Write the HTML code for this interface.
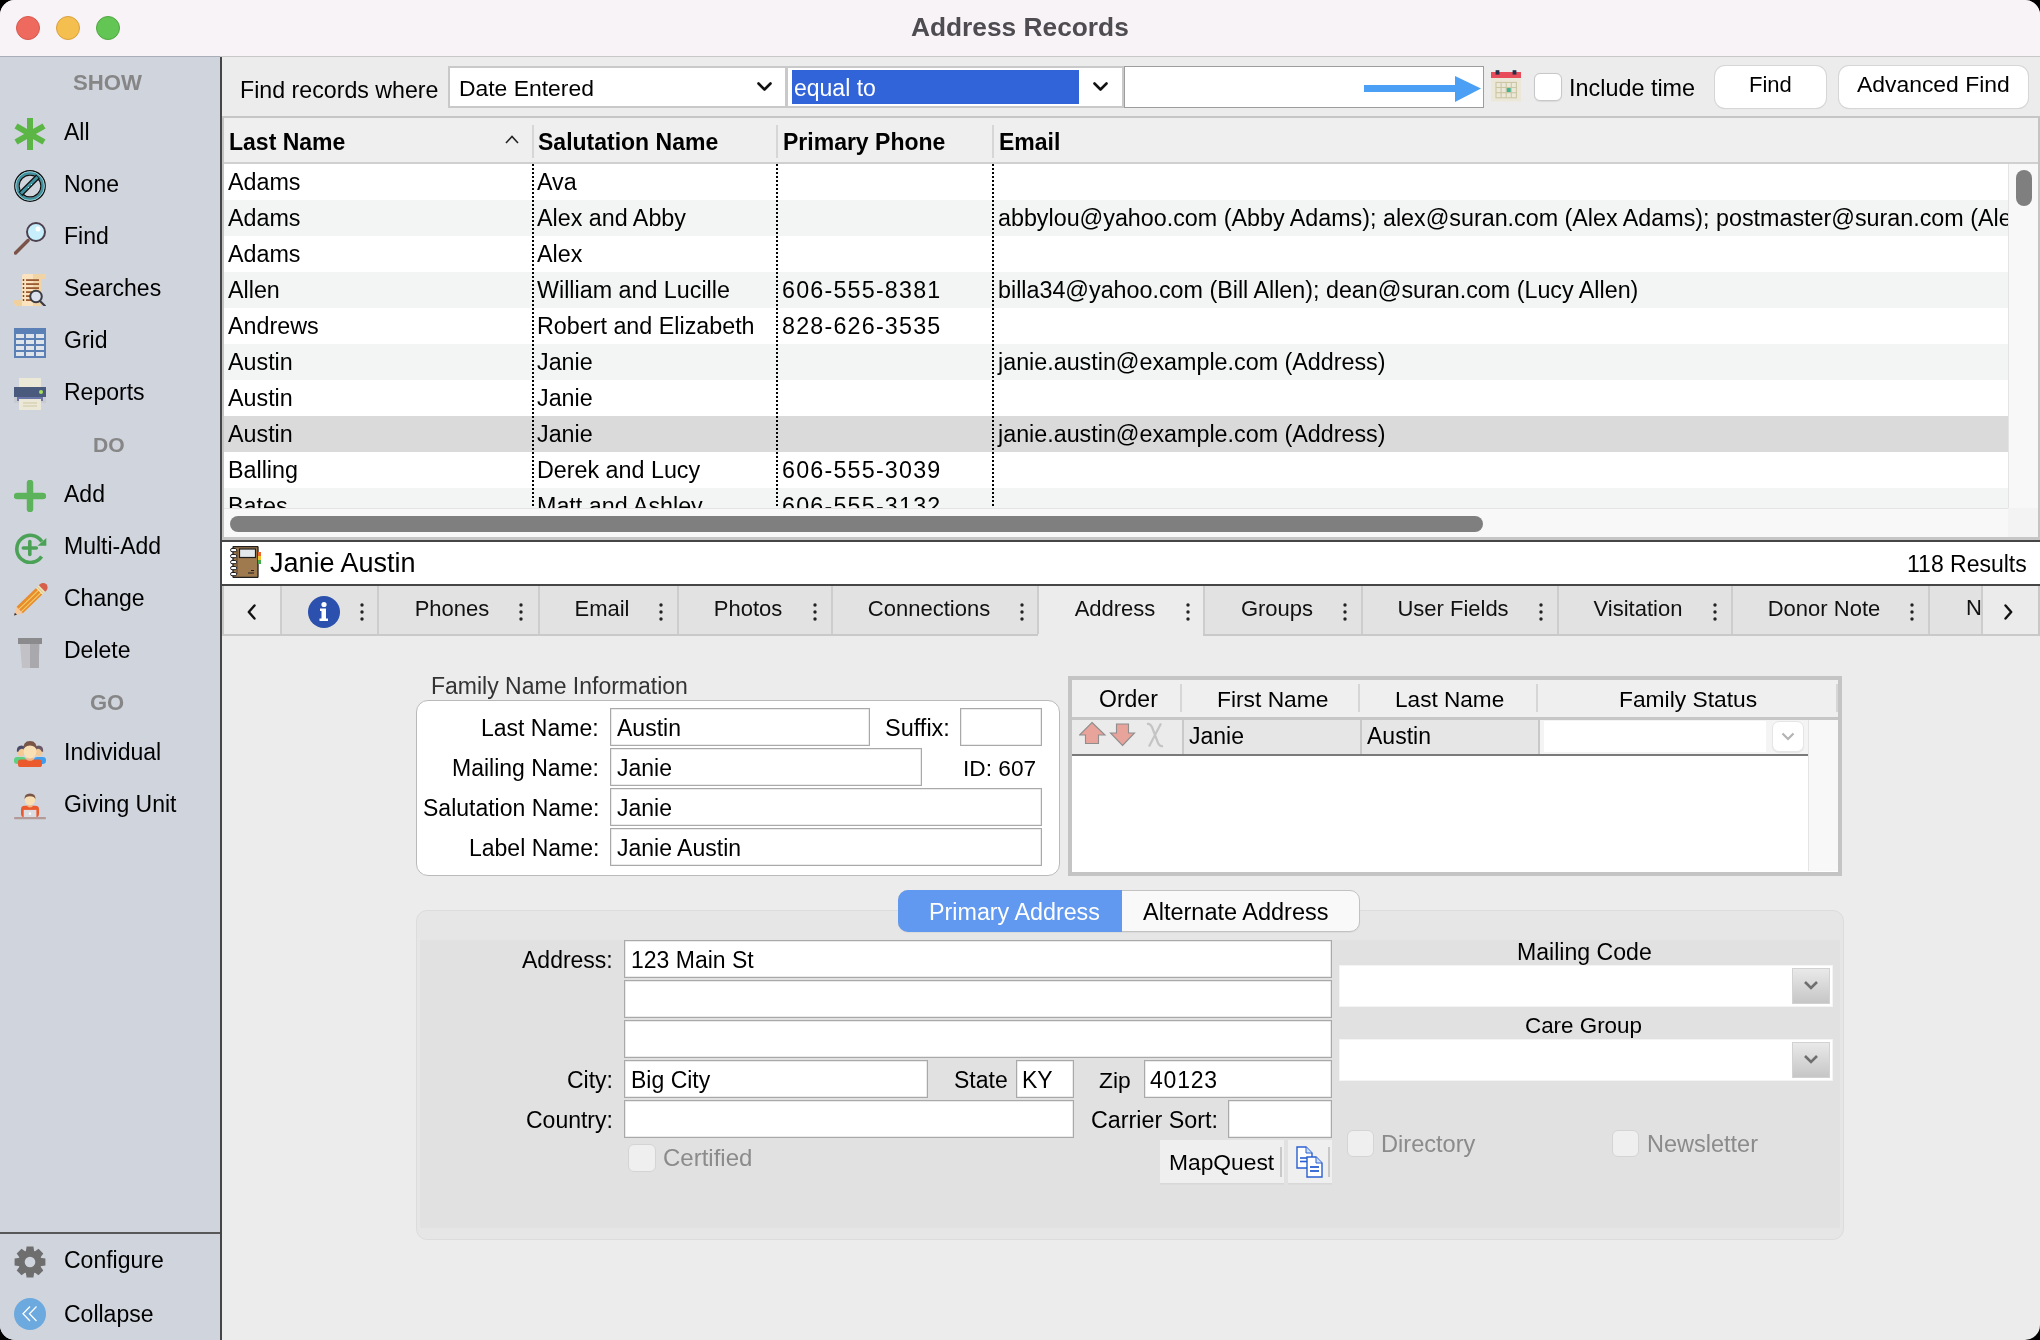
<!DOCTYPE html><html><head><meta charset="utf-8"><title>Address Records</title><style>
html,body{margin:0;padding:0;background:#000;}
#win{position:absolute;left:0;top:0;width:2040px;height:1340px;overflow:hidden;border-radius:15px;background:#ececec;font-family:"Liberation Sans",sans-serif;color:#000;}
.t{position:absolute;white-space:nowrap;will-change:transform;}
.r{position:absolute;box-sizing:border-box;}
</style></head><body><div id="win">
<div class="r" style="left:0px;top:0px;width:2040px;height:56px;background:#f7f3f7;"></div>
<div class="r" style="left:0px;top:56px;width:220px;height:1px;background:#a9aeb8;"></div>
<div class="r" style="left:220px;top:56px;width:1820px;height:1px;background:#c8c8c8;"></div>
<div class="r" style="left:16px;top:16px;width:24px;height:24px;border-radius:50%;background:#ee6a5f;border:1px solid #d8574c;"></div>
<div class="r" style="left:56px;top:16px;width:24px;height:24px;border-radius:50%;background:#f5bf4f;border:1px solid #d9a03f;"></div>
<div class="r" style="left:96px;top:16px;width:24px;height:24px;border-radius:50%;background:#62c554;border:1px solid #4fa73f;"></div>
<div class="t" style="top:14px;font-size:26.3px;line-height:26.3px;font-weight:700;color:#4e4c50;left:911.0px;">Address Records</div>
<div class="r" style="left:0px;top:57px;width:220px;height:1283px;background:#d0d4dd;"></div>
<div class="r" style="left:220px;top:57px;width:2px;height:1283px;background:#454545;"></div>
<div class="t" style="top:72px;font-size:22.2px;line-height:22.2px;font-weight:700;color:#868686;left:72.8px;">SHOW</div>
<div class="t" style="top:434px;font-size:21.1px;line-height:21.1px;font-weight:700;color:#868686;left:93.3px;">DO</div>
<div class="t" style="top:692px;font-size:22px;line-height:22px;font-weight:700;color:#868686;left:-493px;width:1200px;text-align:center;">GO</div>
<div class="t" style="top:121px;font-size:23px;line-height:23px;left:64px;">All</div>
<div class="t" style="top:173px;font-size:23px;line-height:23px;left:64px;">None</div>
<div class="t" style="top:225px;font-size:23px;line-height:23px;left:64px;">Find</div>
<div class="t" style="top:277px;font-size:23px;line-height:23px;left:64px;">Searches</div>
<div class="t" style="top:329px;font-size:23px;line-height:23px;left:64px;">Grid</div>
<div class="t" style="top:381px;font-size:23px;line-height:23px;left:64px;">Reports</div>
<div class="t" style="top:483px;font-size:23px;line-height:23px;left:64px;">Add</div>
<div class="t" style="top:535px;font-size:23px;line-height:23px;left:64px;">Multi-Add</div>
<div class="t" style="top:587px;font-size:23px;line-height:23px;left:64px;">Change</div>
<div class="t" style="top:639px;font-size:23px;line-height:23px;left:64px;">Delete</div>
<div class="t" style="top:741px;font-size:23px;line-height:23px;left:64px;">Individual</div>
<div class="t" style="top:793px;font-size:23px;line-height:23px;left:64px;">Giving Unit</div>
<div class="t" style="top:1249px;font-size:23px;line-height:23px;left:64px;">Configure</div>
<div class="t" style="top:1303px;font-size:23px;line-height:23px;left:64px;">Collapse</div>
<div class="r" style="left:0px;top:1232px;width:220px;height:2px;background:#585858;"></div>
<svg class="r" style="left:14px;top:118px;" width="32" height="32" viewBox="0 0 32 32"><g stroke="#5cb646" stroke-width="6"><line x1="16" y1="0" x2="16" y2="32"/><line x1="2" y1="8" x2="30" y2="24"/><line x1="2" y1="24" x2="30" y2="8"/></g></svg>
<svg class="r" style="left:14px;top:170px;" width="32" height="32" viewBox="0 0 32 32"><circle cx="16" cy="16" r="15.2" fill="none" stroke="#111" stroke-width="1.4"/><circle cx="16" cy="16" r="13" fill="none" stroke="#3f93a0" stroke-width="3"/><circle cx="16" cy="16" r="14.3" fill="none" stroke="#bfe6ec" stroke-width="0.6"/><circle cx="16" cy="16" r="10.9" fill="none" stroke="#111" stroke-width="1.2"/><line x1="6.5" y1="24" x2="24" y2="6.5" stroke="#111" stroke-width="5.4"/><line x1="7" y1="23.5" x2="23.5" y2="7" stroke="#3f93a0" stroke-width="3"/><circle cx="14.5" cy="17.5" r="0.6" fill="#cfe"/><circle cx="17.5" cy="14.5" r="0.6" fill="#cfe"/></svg>
<svg class="r" style="left:14px;top:221px;" width="32" height="34" viewBox="0 0 32 34"><line x1="1.5" y1="32" x2="14" y2="19.5" stroke="#7a5448" stroke-width="3.5" stroke-linecap="round"/><circle cx="22" cy="11" r="9" fill="#c7effb" stroke="#4d4150" stroke-width="2"/><circle cx="24" cy="8" r="2.5" fill="#fff"/></svg>
<svg class="r" style="left:14px;top:274px;" width="32" height="32" viewBox="0 0 32 32"><path d="M8 2 Q8 0 10 0 H30 Q32 0 32 2 V5 H27 V32 H4 Q0 32 0 28 V26 H8 Z" fill="#fbe3c0"/><path d="M19 0 H30 Q32 0 32 2 V5 H27 V32 H19 Z" fill="#efcf9e" opacity="0.8"/><path d="M0 26 H8 V32 H4 Q0 32 0 28 Z" fill="#f0d09c"/><circle cx="9.5" cy="6" r="0.9" fill="#6b3f25"/><rect x="12" y="5.2" width="13" height="1.8" fill="#9a5a32"/><circle cx="9.5" cy="10" r="0.9" fill="#6b3f25"/><rect x="12" y="9.2" width="13" height="1.8" fill="#9a5a32"/><circle cx="9.5" cy="14" r="0.9" fill="#6b3f25"/><rect x="12" y="13.2" width="13" height="1.8" fill="#9a5a32"/><circle cx="9.5" cy="18" r="0.9" fill="#6b3f25"/><rect x="12" y="17.2" width="13" height="1.8" fill="#9a5a32"/><circle cx="9.5" cy="22" r="0.9" fill="#6b3f25"/><rect x="12" y="21.2" width="13" height="1.8" fill="#9a5a32"/><circle cx="9.5" cy="26" r="0.9" fill="#6b3f25"/><rect x="12" y="25.2" width="13" height="1.8" fill="#9a5a32"/><circle cx="22" cy="22.5" r="5.8" fill="#dde1ee" stroke="#3c3c44" stroke-width="2"/><line x1="26" y1="27" x2="31" y2="32" stroke="#3c3c44" stroke-width="2.2" stroke-linecap="round"/></svg>
<svg class="r" style="left:14px;top:328px;" width="32" height="30" viewBox="0 0 32 30"><rect x="0" y="0" width="32" height="30" fill="#5b80b6"/><rect x="2" y="6" width="8" height="4" fill="#dfe3ea"/><rect x="12" y="6" width="8" height="4" fill="#dfe3ea"/><rect x="22" y="6" width="8" height="4" fill="#dfe3ea"/><rect x="2" y="12" width="8" height="4" fill="#dfe3ea"/><rect x="12" y="12" width="8" height="4" fill="#dfe3ea"/><rect x="22" y="12" width="8" height="4" fill="#dfe3ea"/><rect x="2" y="18" width="8" height="4" fill="#dfe3ea"/><rect x="12" y="18" width="8" height="4" fill="#dfe3ea"/><rect x="22" y="18" width="8" height="4" fill="#dfe3ea"/><rect x="2" y="24" width="8" height="4" fill="#dfe3ea"/><rect x="12" y="24" width="8" height="4" fill="#dfe3ea"/><rect x="22" y="24" width="8" height="4" fill="#dfe3ea"/></svg>
<svg class="r" style="left:14px;top:378px;" width="32" height="32" viewBox="0 0 32 32"><rect x="5" y="0" width="22" height="10" fill="#ece8d8"/><rect x="0" y="9" width="32" height="10" fill="#4a5a7c"/><circle cx="27" cy="14" r="2" fill="#a6e05a"/><rect x="0" y="19" width="32" height="6" fill="#c9cbd0"/><rect x="3" y="19" width="26" height="4" fill="#6a76a8"/><rect x="5" y="21" width="22" height="11" fill="#ece8d8"/><g stroke="#cfc7a4" stroke-width="1"><line x1="9" y1="25" x2="23" y2="25"/><line x1="9" y1="28" x2="23" y2="28"/></g></svg>
<svg class="r" style="left:14px;top:480px;" width="32" height="32" viewBox="0 0 32 32"><g stroke="#5cb35c" stroke-width="6.5" stroke-linecap="round"><line x1="16" y1="3" x2="16" y2="29"/><line x1="3" y1="16" x2="29" y2="16"/></g></svg>
<svg class="r" style="left:14px;top:532px;" width="33" height="32" viewBox="0 0 33 32"><path d="M27.8 9.5 A13.6 13.6 0 1 0 27.6 24.6" fill="none" stroke="#4ba257" stroke-width="3.6"/><path d="M23.5 13.8 L32.3 6 L32.3 13.8 Z" fill="#4ba257"/><g stroke="#4ba257" stroke-width="3.6" stroke-linecap="round"><line x1="15.8" y1="9.5" x2="15.8" y2="22.5"/><line x1="9.3" y1="16" x2="22.3" y2="16"/></g></svg>
<svg class="r" style="left:14px;top:583px;overflow:visible;" width="32" height="34" viewBox="0 0 32 34"><g transform="translate(15.8 17.3) rotate(-44)"><path d="M-22 0 L-14 -4.5 L-14 4.5 Z" fill="#f6c89a"/><path d="M-22 0 L-19.3 -1.5 L-19.3 1.5 Z" fill="#2e3340"/><rect x="-14" y="-4.5" width="27" height="9" fill="#e98c2c"/><rect x="-14" y="-1.6" width="27" height="1" fill="#f3d36a"/><rect x="-14" y="1.8" width="27" height="1" fill="#f3d36a"/><rect x="13" y="-4.5" width="4" height="9" fill="#efe4b8"/><rect x="14.3" y="-4.5" width="1" height="9" fill="#d9c98a"/><path d="M17 -4.5 H18.5 A4.5 4.5 0 0 1 18.5 4.5 H17 Z" fill="#d6604c"/></g></svg>
<svg class="r" style="left:18px;top:638px;" width="24" height="30" viewBox="0 0 24 30"><rect x="0" y="0" width="24" height="6" fill="#8b8b8d"/><path d="M2 6 H22 L20 30 H4 Z" fill="#c2c2c6"/><rect x="12" y="6" width="9" height="24" fill="#a9a9ad"/></svg>
<svg class="r" style="left:13px;top:739px;" width="34" height="29" viewBox="0 0 34 29"><rect x="1" y="18" width="12" height="7" rx="3.2" fill="#5cd080"/><rect x="21" y="18" width="12" height="7" rx="3.2" fill="#3d9ff0"/><ellipse cx="8" cy="13" rx="3.6" ry="4.6" fill="#f3c995"/><path d="M3.8 12.5 Q3.5 6.5 8.5 6.5 Q11.5 6.7 12 9 L10 10 Q7 9 5 13 Z" fill="#4b4a68"/><ellipse cx="26" cy="13" rx="3.6" ry="4.6" fill="#f3c995"/><path d="M30.2 12.5 Q30.5 6.5 25.5 6.5 Q22.5 6.7 22 9 L24 10 Q27 9 29 13 Z" fill="#6a5868"/><rect x="5" y="20.5" width="24" height="7.5" rx="2.6" fill="#ea5a2c"/><ellipse cx="17" cy="19.5" rx="3.5" ry="2.3" fill="#f0b888"/><ellipse cx="17" cy="12.3" rx="6.4" ry="7.3" fill="#f9e0b4"/><path d="M10.3 11.5 Q9.5 2 17 2 Q24.5 2 23.7 11.5 Q23 6.8 17 6.5 Q11 6.8 10.3 11.5 Z" fill="#7a5545"/></svg>
<svg class="r" style="left:13px;top:792px;" width="34" height="28" viewBox="0 0 34 28"><rect x="8" y="13.7" width="18" height="11.5" rx="3.5" fill="#ea5a2c"/><ellipse cx="17" cy="13.8" rx="2.8" ry="1.6" fill="#f0b888"/><ellipse cx="17" cy="7.6" rx="5.2" ry="5.8" fill="#f9e0b4"/><path d="M11.6 7.5 Q11 1.4 17 1.4 Q23 1.4 22.4 7.5 Q21.5 4.2 17 4.2 Q12.5 4.2 11.6 7.5 Z" fill="#7a5545"/><rect x="10.7" y="17.9" width="12.7" height="7.3" fill="#dcdde3"/><rect x="16" y="20.6" width="2" height="2" fill="#fff"/><rect x="1" y="25" width="32" height="2.2" rx="1" fill="#b39a98"/></svg>
<svg class="r" style="left:14px;top:1246px;" width="32" height="32" viewBox="0 0 32 32"><path d="M12.6 0.6 H19.4 L20.3 6 H11.7 Z" fill="#6e6e6e" transform="rotate(0 16 16)"/><path d="M12.6 0.6 H19.4 L20.3 6 H11.7 Z" fill="#6e6e6e" transform="rotate(45 16 16)"/><path d="M12.6 0.6 H19.4 L20.3 6 H11.7 Z" fill="#6e6e6e" transform="rotate(90 16 16)"/><path d="M12.6 0.6 H19.4 L20.3 6 H11.7 Z" fill="#6e6e6e" transform="rotate(135 16 16)"/><path d="M12.6 0.6 H19.4 L20.3 6 H11.7 Z" fill="#6e6e6e" transform="rotate(180 16 16)"/><path d="M12.6 0.6 H19.4 L20.3 6 H11.7 Z" fill="#6e6e6e" transform="rotate(225 16 16)"/><path d="M12.6 0.6 H19.4 L20.3 6 H11.7 Z" fill="#6e6e6e" transform="rotate(270 16 16)"/><path d="M12.6 0.6 H19.4 L20.3 6 H11.7 Z" fill="#6e6e6e" transform="rotate(315 16 16)"/><circle cx="16" cy="16" r="11.6" fill="#6e6e6e"/><circle cx="16" cy="16" r="5.3" fill="#d0d4dd"/></svg>
<svg class="r" style="left:14px;top:1298px;" width="32" height="32" viewBox="0 0 32 32"><circle cx="16" cy="16" r="16" fill="#6ba9de"/><polyline points="16,8.5 9,15.8 16,23" fill="none" stroke="#fff" stroke-width="1.3"/><polyline points="22.5,8.5 15.5,15.8 22.5,23" fill="none" stroke="#fff" stroke-width="1.3"/></svg>
<div class="t" style="top:79px;font-size:23.2px;line-height:23.2px;left:239.6px;">Find records where</div>
<div class="r" style="left:448px;top:66px;width:339px;height:42px;background:#fff;border:2px solid #c9c9c9;"></div>
<div class="t" style="top:77px;font-size:22.9px;line-height:22.9px;left:459.0px;">Date Entered</div>
<svg class="r" style="left:757px;top:82px;" width="15" height="10" viewBox="0 0 15 10"><polyline points="1.5,1.5 7.5,7.5 13.5,1.5" fill="none" stroke="#111" stroke-width="2.6" stroke-linecap="round" stroke-linejoin="round"/></svg>
<div class="r" style="left:786px;top:66px;width:338px;height:42px;background:#fff;border:2px solid #c9c9c9;"></div>
<div class="r" style="left:792px;top:70px;width:287px;height:34px;background:#3163d9;"></div>
<div class="t" style="top:77px;font-size:23px;line-height:23px;color:#fff;left:794px;">equal to</div>
<svg class="r" style="left:1093px;top:82px;" width="15" height="10" viewBox="0 0 15 10"><polyline points="1.5,1.5 7.5,7.5 13.5,1.5" fill="none" stroke="#111" stroke-width="2.6" stroke-linecap="round" stroke-linejoin="round"/></svg>
<div class="r" style="left:1124px;top:66px;width:360px;height:42px;background:#fff;border:1px solid #9d9d9d;"></div>
<svg class="r" style="left:1362px;top:74px;" width="120" height="30" viewBox="0 0 120 30"><rect x="2" y="11" width="92" height="7" fill="#4b9ff4"/><path d="M93 2 L119 14.5 L93 28 Z" fill="#4b9ff4"/></svg>
<svg class="r" style="left:1491px;top:69px;" width="30" height="33" viewBox="0 0 30 33"><rect x="0" y="9" width="30" height="23.5" fill="#ebe8da"/><rect x="0" y="3" width="30" height="6" fill="#e84b5a"/><rect x="4.6" y="1.2" width="3.8" height="4.4" fill="#243049"/><rect x="21.6" y="1.2" width="3.8" height="4.4" fill="#243049"/><rect x="15.3" y="18.6" width="4.6" height="4.6" fill="#3eb592"/><g stroke="#cdc6a2" stroke-width="1.1" fill="none"><rect x="5" y="13.4" width="20.4" height="15.4"/><line x1="10.1" y1="13.4" x2="10.1" y2="28.8"/><line x1="15.2" y1="13.4" x2="15.2" y2="28.8"/><line x1="20.3" y1="13.4" x2="20.3" y2="28.8"/><line x1="5" y1="18.5" x2="25.4" y2="18.5"/><line x1="5" y1="23.7" x2="25.4" y2="23.7"/></g></svg>
<div class="r" style="left:1534px;top:73px;width:28px;height:28px;background:#fff;border:1px solid #c8c8c8;border-radius:6px;box-shadow:0 0.5px 1px rgba(0,0,0,0.08);"></div>
<div class="t" style="top:77px;font-size:23.4px;line-height:23.4px;left:1569.0px;">Include time</div>
<div class="r" style="left:1715px;top:66px;width:111px;height:42px;background:#fff;border-radius:10px;box-shadow:0 0 0 1px #d6d6d6, 0 1px 1px rgba(0,0,0,0.12);"></div>
<div class="t" style="top:74px;font-size:22.0px;line-height:22.0px;left:1749.0px;">Find</div>
<div class="r" style="left:1839px;top:66px;width:189px;height:42px;background:#fff;border-radius:10px;box-shadow:0 0 0 1px #d6d6d6, 0 1px 1px rgba(0,0,0,0.12);"></div>
<div class="t" style="top:73px;font-size:22.9px;line-height:22.9px;left:1857.0px;">Advanced Find</div>
<div class="r" style="left:222px;top:116px;width:1818px;height:2px;background:#c6c6c6;"></div>
<div class="r" style="left:222px;top:118px;width:2px;height:422px;background:#c4c4c4;"></div>
<div class="r" style="left:2038px;top:118px;width:2px;height:422px;background:#c4c4c4;"></div>
<div class="r" style="left:224px;top:118px;width:1814px;height:44px;background:#efefef;"></div>
<div class="r" style="left:224px;top:162px;width:1814px;height:2px;background:#d0d0d0;"></div>
<div class="t" style="top:131px;font-size:23px;line-height:23px;font-weight:700;left:229px;">Last Name</div>
<svg class="r" style="left:505px;top:135px;" width="14" height="9" viewBox="0 0 14 9"><polyline points="1,8 7,1.5 13,8" fill="none" stroke="#222" stroke-width="1.6"/></svg>
<div class="r" style="left:532px;top:125px;width:2px;height:33px;background:#d6d6d6;"></div>
<div class="r" style="left:776px;top:125px;width:2px;height:33px;background:#d6d6d6;"></div>
<div class="r" style="left:992px;top:125px;width:2px;height:33px;background:#d6d6d6;"></div>
<div class="t" style="top:131px;font-size:23px;line-height:23px;font-weight:700;left:538px;">Salutation Name</div>
<div class="t" style="top:131px;font-size:23px;line-height:23px;font-weight:700;left:783px;">Primary Phone</div>
<div class="t" style="top:131px;font-size:23px;line-height:23px;font-weight:700;left:999px;">Email</div>
<div class="r" style="left:224px;top:164px;width:1784px;height:344px;overflow:hidden;background:#fff;">
<div class="r" style="left:0;top:0px;width:1784px;height:36px;background:#fff;"></div>
<div class="t" style="left:4px;top:7px;font-size:23.3px;line-height:23px;">Adams</div>
<div class="t" style="left:313px;top:7px;font-size:23.3px;line-height:23px;">Ava</div>
<div class="r" style="left:0;top:36px;width:1784px;height:36px;background:#f3f4f4;"></div>
<div class="t" style="left:4px;top:43px;font-size:23.3px;line-height:23px;">Adams</div>
<div class="t" style="left:313px;top:43px;font-size:23.3px;line-height:23px;">Alex and Abby</div>
<div class="t" style="left:774px;top:43px;font-size:23.3px;line-height:23px;">abbylou@yahoo.com (Abby Adams); alex@suran.com (Alex Adams); postmaster@suran.com (Alex Adams)</div>
<div class="r" style="left:0;top:72px;width:1784px;height:36px;background:#fff;"></div>
<div class="t" style="left:4px;top:79px;font-size:23.3px;line-height:23px;">Adams</div>
<div class="t" style="left:313px;top:79px;font-size:23.3px;line-height:23px;">Alex</div>
<div class="r" style="left:0;top:108px;width:1784px;height:36px;background:#f3f4f4;"></div>
<div class="t" style="left:4px;top:115px;font-size:23.3px;line-height:23px;">Allen</div>
<div class="t" style="left:313px;top:115px;font-size:23.3px;line-height:23px;">William and Lucille</div>
<div class="t" style="left:558px;top:115px;font-size:23.3px;line-height:23px;letter-spacing:1.2px;">606-555-8381</div>
<div class="t" style="left:774px;top:115px;font-size:23.3px;line-height:23px;">billa34@yahoo.com (Bill Allen); dean@suran.com (Lucy Allen)</div>
<div class="r" style="left:0;top:144px;width:1784px;height:36px;background:#fff;"></div>
<div class="t" style="left:4px;top:151px;font-size:23.3px;line-height:23px;">Andrews</div>
<div class="t" style="left:313px;top:151px;font-size:23.3px;line-height:23px;">Robert and Elizabeth</div>
<div class="t" style="left:558px;top:151px;font-size:23.3px;line-height:23px;letter-spacing:1.2px;">828-626-3535</div>
<div class="r" style="left:0;top:180px;width:1784px;height:36px;background:#f3f4f4;"></div>
<div class="t" style="left:4px;top:187px;font-size:23.3px;line-height:23px;">Austin</div>
<div class="t" style="left:313px;top:187px;font-size:23.3px;line-height:23px;">Janie</div>
<div class="t" style="left:774px;top:187px;font-size:23.3px;line-height:23px;">janie.austin@example.com (Address)</div>
<div class="r" style="left:0;top:216px;width:1784px;height:36px;background:#fff;"></div>
<div class="t" style="left:4px;top:223px;font-size:23.3px;line-height:23px;">Austin</div>
<div class="t" style="left:313px;top:223px;font-size:23.3px;line-height:23px;">Janie</div>
<div class="r" style="left:0;top:252px;width:1784px;height:36px;background:#dadada;"></div>
<div class="t" style="left:4px;top:259px;font-size:23.3px;line-height:23px;">Austin</div>
<div class="t" style="left:313px;top:259px;font-size:23.3px;line-height:23px;">Janie</div>
<div class="t" style="left:774px;top:259px;font-size:23.3px;line-height:23px;">janie.austin@example.com (Address)</div>
<div class="r" style="left:0;top:288px;width:1784px;height:36px;background:#fff;"></div>
<div class="t" style="left:4px;top:295px;font-size:23.3px;line-height:23px;">Balling</div>
<div class="t" style="left:313px;top:295px;font-size:23.3px;line-height:23px;">Derek and Lucy</div>
<div class="t" style="left:558px;top:295px;font-size:23.3px;line-height:23px;letter-spacing:1.2px;">606-555-3039</div>
<div class="r" style="left:0;top:324px;width:1784px;height:36px;background:#f3f4f4;"></div>
<div class="t" style="left:4px;top:331px;font-size:23.3px;line-height:23px;">Bates</div>
<div class="t" style="left:313px;top:331px;font-size:23.3px;line-height:23px;">Matt and Ashley</div>
<div class="t" style="left:558px;top:331px;font-size:23.3px;line-height:23px;letter-spacing:1.2px;">606-555-3132</div>
<div class="r" style="left:308px;top:0;width:2px;height:344px;background:repeating-linear-gradient(to bottom,#000 0 2px,transparent 2px 4px);"></div>
<div class="r" style="left:552px;top:0;width:2px;height:344px;background:repeating-linear-gradient(to bottom,#000 0 2px,transparent 2px 4px);"></div>
<div class="r" style="left:768px;top:0;width:2px;height:344px;background:repeating-linear-gradient(to bottom,#000 0 2px,transparent 2px 4px);"></div>
</div>
<div class="r" style="left:2008px;top:164px;width:30px;height:344px;background:#f8f8f8;border-left:1px solid #e4e4e4;"></div>
<div class="r" style="left:2016px;top:170px;width:16px;height:36px;background:#7f7f7f;border-radius:8px;"></div>
<div class="r" style="left:224px;top:508px;width:1784px;height:29px;background:#f8f8f8;border-top:1px solid #e4e4e4;"></div>
<div class="r" style="left:2008px;top:508px;width:30px;height:29px;background:#f3f3f3;"></div>
<div class="r" style="left:230px;top:516px;width:1253px;height:16px;background:#7f7f7f;border-radius:8px;"></div>
<div class="r" style="left:222px;top:537px;width:1818px;height:3px;background:#c6c6c6;"></div>
<div class="r" style="left:222px;top:540px;width:1818px;height:2px;background:#464646;"></div>
<div class="r" style="left:222px;top:542px;width:1818px;height:42px;background:#fff;"></div>
<div class="r" style="left:222px;top:584px;width:1818px;height:2px;background:#464646;"></div>
<svg class="r" style="left:230px;top:546px;" width="32" height="32" viewBox="0 0 32 32"><rect x="3" y="0.5" width="25" height="31" rx="1" fill="#9f7a4e" stroke="#1e1e1e" stroke-width="1.3"/><rect x="9.5" y="3" width="16" height="8.5" fill="#e3e8ec" stroke="#1e1e1e" stroke-width="1.2"/><line x1="7" y1="4" x2="7" y2="28" stroke="#5b4026" stroke-width="1"/><rect x="0.6" y="2.5" width="6" height="3.2" rx="1.4" fill="#fff" stroke="#1e1e1e" stroke-width="1"/><rect x="0.6" y="8.5" width="6" height="3.2" rx="1.4" fill="#fff" stroke="#1e1e1e" stroke-width="1"/><rect x="0.6" y="14.5" width="6" height="3.2" rx="1.4" fill="#fff" stroke="#1e1e1e" stroke-width="1"/><rect x="0.6" y="20.5" width="6" height="3.2" rx="1.4" fill="#fff" stroke="#1e1e1e" stroke-width="1"/><rect x="0.6" y="26.5" width="6" height="3.2" rx="1.4" fill="#fff" stroke="#1e1e1e" stroke-width="1"/><rect x="28" y="6" width="3" height="4" fill="#e8692b"/><rect x="28" y="10" width="3" height="4" fill="#f0c430"/><rect x="28" y="14" width="3" height="4" fill="#4aa84c"/><line x1="18" y1="27" x2="24" y2="27" stroke="#1e1e1e" stroke-width="1"/><line x1="21" y1="24.5" x2="24" y2="24.5" stroke="#1e1e1e" stroke-width="1"/></svg>
<div class="t" style="top:550px;font-size:27px;line-height:27px;left:270px;">Janie Austin</div>
<div class="t" style="top:553px;font-size:23px;line-height:23px;right:13px;text-align:right;">118 Results</div>
<div class="r" style="left:222px;top:586px;width:2px;height:50px;background:#c8c8c8;"></div>
<div class="r" style="left:2038px;top:586px;width:2px;height:50px;background:#c8c8c8;"></div>
<div class="r" style="left:224px;top:586px;width:1814px;height:48px;background:#e2e2e2;"></div>
<div class="r" style="left:224px;top:586px;width:56px;height:48px;background:#ebebeb;"></div>
<div class="r" style="left:1982px;top:586px;width:56px;height:48px;background:#ebebeb;"></div>
<div class="r" style="left:224px;top:634px;width:814px;height:2px;background:#c9c9c9;"></div>
<div class="r" style="left:1203px;top:634px;width:835px;height:2px;background:#c9c9c9;"></div>
<div class="r" style="left:1038px;top:586px;width:165px;height:50px;background:#ececec;"></div>
<div class="r" style="left:280px;top:586px;width:2px;height:48px;background:#cdcdcd;"></div>
<div class="r" style="left:377px;top:586px;width:2px;height:48px;background:#cdcdcd;"></div>
<div class="r" style="left:538px;top:586px;width:2px;height:48px;background:#cdcdcd;"></div>
<div class="r" style="left:677px;top:586px;width:2px;height:48px;background:#cdcdcd;"></div>
<div class="r" style="left:831px;top:586px;width:2px;height:48px;background:#cdcdcd;"></div>
<div class="r" style="left:1037px;top:586px;width:2px;height:48px;background:#cdcdcd;"></div>
<div class="r" style="left:1203px;top:586px;width:2px;height:48px;background:#cdcdcd;"></div>
<div class="r" style="left:1361px;top:586px;width:2px;height:48px;background:#cdcdcd;"></div>
<div class="r" style="left:1557px;top:586px;width:2px;height:48px;background:#cdcdcd;"></div>
<div class="r" style="left:1731px;top:586px;width:2px;height:48px;background:#cdcdcd;"></div>
<div class="r" style="left:1928px;top:586px;width:2px;height:48px;background:#cdcdcd;"></div>
<div class="r" style="left:1981px;top:586px;width:2px;height:48px;background:#cdcdcd;"></div>
<svg class="r" style="left:247px;top:604px;" width="9" height="16" viewBox="0 0 9 16"><polyline points="7.5,1.5 1.8,8 7.5,14.5" fill="none" stroke="#111" stroke-width="2.4" stroke-linecap="round" stroke-linejoin="round"/></svg>
<svg class="r" style="left:2004px;top:604px;" width="9" height="16" viewBox="0 0 9 16"><polyline points="1.5,1.5 7.2,8 1.5,14.5" fill="none" stroke="#111" stroke-width="2.4" stroke-linecap="round" stroke-linejoin="round"/></svg>
<svg class="r" style="left:308px;top:596px;" width="32" height="32" viewBox="0 0 32 32"><circle cx="16" cy="16" r="16" fill="#2b50ad"/><circle cx="16" cy="8.5" r="2.6" fill="#fff"/><path d="M12 12.5 H18 V22.5 H20 V25 H11.5 V22.5 H13.5 V15 H12 Z" fill="#fff"/></svg>
<svg class="r" style="left:360px;top:603px;" width="4" height="18" viewBox="0 0 4 18"><circle cx="2" cy="2" r="1.7" fill="#222"/><circle cx="2" cy="9" r="1.7" fill="#222"/><circle cx="2" cy="16" r="1.7" fill="#222"/></svg>
<div class="t" style="top:598px;font-size:22px;line-height:22px;color:#111;left:-148px;width:1200px;text-align:center;">Phones</div>
<svg class="r" style="left:519px;top:603px;" width="4" height="18" viewBox="0 0 4 18"><circle cx="2" cy="2" r="1.7" fill="#222"/><circle cx="2" cy="9" r="1.7" fill="#222"/><circle cx="2" cy="16" r="1.7" fill="#222"/></svg>
<div class="t" style="top:598px;font-size:22px;line-height:22px;color:#111;left:2px;width:1200px;text-align:center;">Email</div>
<svg class="r" style="left:659px;top:603px;" width="4" height="18" viewBox="0 0 4 18"><circle cx="2" cy="2" r="1.7" fill="#222"/><circle cx="2" cy="9" r="1.7" fill="#222"/><circle cx="2" cy="16" r="1.7" fill="#222"/></svg>
<div class="t" style="top:598px;font-size:22px;line-height:22px;color:#111;left:148px;width:1200px;text-align:center;">Photos</div>
<svg class="r" style="left:813px;top:603px;" width="4" height="18" viewBox="0 0 4 18"><circle cx="2" cy="2" r="1.7" fill="#222"/><circle cx="2" cy="9" r="1.7" fill="#222"/><circle cx="2" cy="16" r="1.7" fill="#222"/></svg>
<div class="t" style="top:598px;font-size:22px;line-height:22px;color:#111;left:329px;width:1200px;text-align:center;">Connections</div>
<svg class="r" style="left:1020px;top:603px;" width="4" height="18" viewBox="0 0 4 18"><circle cx="2" cy="2" r="1.7" fill="#222"/><circle cx="2" cy="9" r="1.7" fill="#222"/><circle cx="2" cy="16" r="1.7" fill="#222"/></svg>
<div class="t" style="top:598px;font-size:22px;line-height:22px;color:#111;left:515px;width:1200px;text-align:center;">Address</div>
<svg class="r" style="left:1186px;top:603px;" width="4" height="18" viewBox="0 0 4 18"><circle cx="2" cy="2" r="1.7" fill="#222"/><circle cx="2" cy="9" r="1.7" fill="#222"/><circle cx="2" cy="16" r="1.7" fill="#222"/></svg>
<div class="t" style="top:598px;font-size:22px;line-height:22px;color:#111;left:677px;width:1200px;text-align:center;">Groups</div>
<svg class="r" style="left:1343px;top:603px;" width="4" height="18" viewBox="0 0 4 18"><circle cx="2" cy="2" r="1.7" fill="#222"/><circle cx="2" cy="9" r="1.7" fill="#222"/><circle cx="2" cy="16" r="1.7" fill="#222"/></svg>
<div class="t" style="top:598px;font-size:22px;line-height:22px;color:#111;left:853px;width:1200px;text-align:center;">User Fields</div>
<svg class="r" style="left:1539px;top:603px;" width="4" height="18" viewBox="0 0 4 18"><circle cx="2" cy="2" r="1.7" fill="#222"/><circle cx="2" cy="9" r="1.7" fill="#222"/><circle cx="2" cy="16" r="1.7" fill="#222"/></svg>
<div class="t" style="top:598px;font-size:22px;line-height:22px;color:#111;left:1038px;width:1200px;text-align:center;">Visitation</div>
<svg class="r" style="left:1713px;top:603px;" width="4" height="18" viewBox="0 0 4 18"><circle cx="2" cy="2" r="1.7" fill="#222"/><circle cx="2" cy="9" r="1.7" fill="#222"/><circle cx="2" cy="16" r="1.7" fill="#222"/></svg>
<div class="t" style="top:598px;font-size:22px;line-height:22px;color:#111;left:1224px;width:1200px;text-align:center;">Donor Note</div>
<svg class="r" style="left:1910px;top:603px;" width="4" height="18" viewBox="0 0 4 18"><circle cx="2" cy="2" r="1.7" fill="#222"/><circle cx="2" cy="9" r="1.7" fill="#222"/><circle cx="2" cy="16" r="1.7" fill="#222"/></svg>
<div class="r" style="left:1930px;top:586px;width:51px;height:48px;overflow:hidden;"><div class="t" style="left:36px;top:597px;top:11px;font-size:22px;line-height:22px;color:#111;">N</div></div>
<div class="t" style="top:675px;font-size:23.0px;line-height:23.0px;color:#333;left:431.2px;">Family Name Information</div>
<div class="r" style="left:416px;top:700px;width:644px;height:176px;background:#fff;border:1px solid #b9b9b9;border-radius:12px;"></div>
<div class="t" style="top:717px;font-size:23px;line-height:23px;right:1441px;text-align:right;">Last Name:</div>
<div class="t" style="top:757px;font-size:23px;line-height:23px;right:1441px;text-align:right;">Mailing Name:</div>
<div class="t" style="top:797px;font-size:23px;line-height:23px;right:1441px;text-align:right;">Salutation Name:</div>
<div class="t" style="top:837px;font-size:23px;line-height:23px;right:1441px;text-align:right;">Label Name:</div>
<div class="r" style="left:610px;top:708px;width:260px;height:38px;background:#fff;border:1px solid #a9a9a9;box-shadow:inset 0 0 0 0.5px #d8d8d8;"></div>
<div class="t" style="top:717px;font-size:23px;line-height:23px;left:617px;">Austin</div>
<div class="r" style="left:610px;top:748px;width:312px;height:38px;background:#fff;border:1px solid #a9a9a9;box-shadow:inset 0 0 0 0.5px #d8d8d8;"></div>
<div class="t" style="top:757px;font-size:23px;line-height:23px;left:617px;">Janie</div>
<div class="r" style="left:610px;top:788px;width:432px;height:38px;background:#fff;border:1px solid #a9a9a9;box-shadow:inset 0 0 0 0.5px #d8d8d8;"></div>
<div class="t" style="top:797px;font-size:23px;line-height:23px;left:617px;">Janie</div>
<div class="r" style="left:610px;top:828px;width:432px;height:38px;background:#fff;border:1px solid #a9a9a9;box-shadow:inset 0 0 0 0.5px #d8d8d8;"></div>
<div class="t" style="top:837px;font-size:23px;line-height:23px;left:617px;">Janie Austin</div>
<div class="t" style="top:717px;font-size:23.5px;line-height:23.5px;left:885.0px;">Suffix:</div>
<div class="r" style="left:960px;top:708px;width:82px;height:38px;background:#fff;border:1px solid #a9a9a9;box-shadow:inset 0 0 0 0.5px #d8d8d8;"></div>
<div class="t" style="top:757px;font-size:22.7px;line-height:22.7px;left:962.8px;">ID: 607</div>
<div class="r" style="left:1068px;top:676px;width:774px;height:200px;border:4px solid #c4c4c4;background:#fff;"></div>
<div class="r" style="left:1072px;top:680px;width:766px;height:37px;background:#efefef;"></div>
<div class="r" style="left:1072px;top:717px;width:766px;height:3px;background:#c6c6c6;"></div>
<div class="r" style="left:1180px;top:684px;width:2px;height:28px;background:#d6d6d6;"></div>
<div class="r" style="left:1358px;top:684px;width:2px;height:28px;background:#d6d6d6;"></div>
<div class="r" style="left:1536px;top:684px;width:2px;height:28px;background:#d6d6d6;"></div>
<div class="r" style="left:1836px;top:684px;width:2px;height:28px;background:#d6d6d6;"></div>
<div class="t" style="top:688px;font-size:23.0px;line-height:23.0px;left:1098.7px;">Order</div>
<div class="t" style="top:688px;font-size:22.8px;line-height:22.8px;left:1217.0px;">First Name</div>
<div class="t" style="top:689px;font-size:22.6px;line-height:22.6px;left:1395.3px;">Last Name</div>
<div class="t" style="top:688px;font-size:22.8px;line-height:22.8px;left:1618.9px;">Family Status</div>
<div class="r" style="left:1072px;top:720px;width:111px;height:34px;background:#ebebeb;"></div>
<div class="r" style="left:1183px;top:720px;width:177px;height:34px;background:#e6e6e6;"></div>
<div class="r" style="left:1361px;top:720px;width:178px;height:34px;background:#e6e6e6;"></div>
<div class="r" style="left:1540px;top:720px;width:268px;height:34px;background:#f4f4f4;"></div>
<div class="r" style="left:1544px;top:721px;width:222px;height:31px;background:#fff;"></div>
<div class="r" style="left:1182px;top:720px;width:1.5px;height:34px;background:#c9c9c9;"></div>
<div class="r" style="left:1360px;top:720px;width:1.5px;height:34px;background:#c9c9c9;"></div>
<div class="r" style="left:1538px;top:720px;width:1.5px;height:34px;background:#c9c9c9;"></div>
<div class="r" style="left:1072px;top:754px;width:736px;height:2px;background:#7a7a7a;"></div>
<div class="r" style="left:1808px;top:720px;width:30px;height:151px;background:#f8f8f8;border-left:1px solid #e4e4e4;"></div>
<div class="t" style="top:725px;font-size:23px;line-height:23px;left:1189px;">Janie</div>
<div class="t" style="top:725px;font-size:23px;line-height:23px;left:1367px;">Austin</div>
<svg class="r" style="left:1079px;top:721px;" width="28" height="24" viewBox="0 0 28 24"><path d="M13 1.5 L26 14 H19.5 V22.5 H6.5 V14 H0.5 Z" fill="#e8a39b" stroke="#8e8e8e" stroke-width="1.1"/></svg>
<svg class="r" style="left:1109px;top:723px;" width="27" height="24" viewBox="0 0 27 24"><path d="M13.5 22.5 L25.5 10 H19.5 V1 H7.5 V10 H1.5 Z" fill="#e8a39b" stroke="#8e8e8e" stroke-width="1.1"/></svg>
<svg class="r" style="left:1145px;top:722px;" width="20" height="26" viewBox="0 0 20 26"><path d="M2 2 Q5 1 7 5 L13 21 Q15 25 18 24 M16 1.5 L4 24.5" fill="none" stroke="#c4c4c4" stroke-width="2.2"/></svg>
<div class="r" style="left:1772px;top:721px;width:32px;height:31px;background:#fff;border:1px solid #e6e6e6;border-radius:7px;box-shadow:0 1px 1px rgba(0,0,0,0.06);"></div>
<svg class="r" style="left:1781px;top:732px;" width="14" height="9" viewBox="0 0 14 9"><polyline points="1.5,1.5 7,7 12.5,1.5" fill="none" stroke="#b3b3b3" stroke-width="2.2"/></svg>
<div class="r" style="left:416px;top:910px;width:1428px;height:330px;background:#e6e6e6;border:1px solid #dcdcdc;border-radius:11px;"></div>
<div class="r" style="left:420px;top:940px;width:1420px;height:288px;background:#e1e1e1;"></div>
<div class="r" style="left:898px;top:890px;width:462px;height:42px;background:#f9f9f9;border:1px solid #c2c2c2;border-radius:10px;box-shadow:0 1px 1px rgba(0,0,0,0.05);"></div>
<div class="r" style="left:898px;top:890px;width:224px;height:42px;background:#6199f0;border-radius:10px 0 0 10px;"></div>
<div class="t" style="top:901px;font-size:23.3px;line-height:23.3px;color:#fff;left:928.5px;">Primary Address</div>
<div class="t" style="top:901px;font-size:23.5px;line-height:23.5px;left:1142.7px;">Alternate Address</div>
<div class="t" style="top:949px;font-size:23px;line-height:23px;right:1427px;text-align:right;">Address:</div>
<div class="r" style="left:624px;top:940px;width:708px;height:38px;background:#fff;border:1px solid #a9a9a9;box-shadow:inset 0 0 0 0.5px #d8d8d8;"></div>
<div class="t" style="top:949px;font-size:23px;line-height:23px;left:631px;">123 Main St</div>
<div class="r" style="left:624px;top:980px;width:708px;height:38px;background:#fff;border:1px solid #a9a9a9;box-shadow:inset 0 0 0 0.5px #d8d8d8;"></div>
<div class="r" style="left:624px;top:1020px;width:708px;height:38px;background:#fff;border:1px solid #a9a9a9;box-shadow:inset 0 0 0 0.5px #d8d8d8;"></div>
<div class="t" style="top:1069px;font-size:23px;line-height:23px;right:1427px;text-align:right;">City:</div>
<div class="r" style="left:624px;top:1060px;width:304px;height:38px;background:#fff;border:1px solid #a9a9a9;box-shadow:inset 0 0 0 0.5px #d8d8d8;"></div>
<div class="t" style="top:1069px;font-size:23px;line-height:23px;left:631px;">Big City</div>
<div class="t" style="top:1069px;font-size:23.0px;line-height:23.0px;left:954.4px;">State</div>
<div class="r" style="left:1016px;top:1060px;width:58px;height:38px;background:#fff;border:1px solid #a9a9a9;box-shadow:inset 0 0 0 0.5px #d8d8d8;"></div>
<div class="t" style="top:1069px;font-size:23px;line-height:23px;left:1022px;">KY</div>
<div class="t" style="top:1069px;font-size:22.8px;line-height:22.8px;left:1099.0px;">Zip</div>
<div class="r" style="left:1144px;top:1060px;width:188px;height:38px;background:#fff;border:1px solid #a9a9a9;box-shadow:inset 0 0 0 0.5px #d8d8d8;"></div>
<div class="t" style="top:1069px;font-size:23px;line-height:23px;left:1150px;letter-spacing:0.8px;">40123</div>
<div class="t" style="top:1109px;font-size:23px;line-height:23px;right:1427px;text-align:right;">Country:</div>
<div class="r" style="left:624px;top:1100px;width:450px;height:38px;background:#fff;border:1px solid #a9a9a9;box-shadow:inset 0 0 0 0.5px #d8d8d8;"></div>
<div class="t" style="top:1109px;font-size:23.3px;line-height:23.3px;left:1090.9px;">Carrier Sort:</div>
<div class="r" style="left:1228px;top:1100px;width:104px;height:38px;background:#fff;border:1px solid #a9a9a9;box-shadow:inset 0 0 0 0.5px #d8d8d8;"></div>
<div class="r" style="left:628px;top:1144px;width:28px;height:28px;background:#efefef;border:1px solid #d4d4d4;border-radius:6px;"></div>
<div class="t" style="top:1146px;font-size:24.0px;line-height:24.0px;color:#8b8b8b;left:662.6px;">Certified</div>
<div class="r" style="left:1160px;top:1140px;width:124px;height:43px;background:#efefef;box-shadow:0 1.5px 0 #d8d8d8;"></div>
<div class="r" style="left:1280px;top:1147px;width:1.5px;height:30px;background:#c8c8c8;"></div>
<div class="t" style="top:1151px;font-size:22.8px;line-height:22.8px;left:1169.0px;">MapQuest</div>
<div class="r" style="left:1288px;top:1140px;width:44px;height:43px;background:#efefef;box-shadow:0 1.5px 0 #d8d8d8;"></div>
<div class="r" style="left:1328px;top:1147px;width:1.5px;height:30px;background:#c8c8c8;"></div>
<svg class="r" style="left:1296px;top:1146px;" width="28" height="32" viewBox="0 0 28 32"><path d="M1 1 H10 L16 7 V22 H1 Z" fill="#fff" stroke="#2a5fd0" stroke-width="1.4"/><path d="M10 1 V7 H16" fill="#cfe0fb" stroke="#2a5fd0" stroke-width="1"/><g stroke="#2a5fd0" stroke-width="1.6"><line x1="4" y1="12" x2="12" y2="12"/><line x1="4" y1="15.5" x2="12" y2="15.5"/></g><path d="M11 11 H20 L26 17 V31 H11 Z" fill="#fff" stroke="#2a5fd0" stroke-width="1.4"/><path d="M20 11 V17 H26" fill="#cfe0fb" stroke="#2a5fd0" stroke-width="1"/><g stroke="#2a5fd0" stroke-width="1.8"><line x1="14" y1="21" x2="23" y2="21"/><line x1="14" y1="25" x2="23" y2="25"/></g></svg>
<div class="t" style="top:941px;font-size:23.1px;line-height:23.1px;left:1516.8px;">Mailing Code</div>
<div class="t" style="top:1015px;font-size:22.4px;line-height:22.4px;left:1525.0px;">Care Group</div>
<div class="r" style="left:1340px;top:966px;width:492px;height:40px;background:#fff;box-shadow:0 0 0 1px #f4f4f4;"></div>
<div class="r" style="left:1792px;top:968px;width:38px;height:36px;background:linear-gradient(#e9e9e9,#c6c6c6);border:1px solid #d2d2d2;"></div>
<svg class="r" style="left:1803px;top:980px;" width="16" height="11" viewBox="0 0 16 11"><polyline points="2,2 8,8 14,2" fill="none" stroke="#6e6e6e" stroke-width="2.6"/></svg>
<div class="r" style="left:1340px;top:1040px;width:492px;height:40px;background:#fff;box-shadow:0 0 0 1px #f4f4f4;"></div>
<div class="r" style="left:1792px;top:1042px;width:38px;height:36px;background:linear-gradient(#e9e9e9,#c6c6c6);border:1px solid #d2d2d2;"></div>
<svg class="r" style="left:1803px;top:1054px;" width="16" height="11" viewBox="0 0 16 11"><polyline points="2,2 8,8 14,2" fill="none" stroke="#6e6e6e" stroke-width="2.6"/></svg>
<div class="r" style="left:1347px;top:1130px;width:27px;height:27px;background:#efefef;border:1px solid #d4d4d4;border-radius:6px;"></div>
<div class="t" style="top:1133px;font-size:23.6px;line-height:23.6px;color:#8b8b8b;left:1381.0px;">Directory</div>
<div class="r" style="left:1612px;top:1130px;width:27px;height:27px;background:#efefef;border:1px solid #d4d4d4;border-radius:6px;"></div>
<div class="t" style="top:1133px;font-size:23.5px;line-height:23.5px;color:#8b8b8b;left:1647.0px;">Newsletter</div>
</div></body></html>
